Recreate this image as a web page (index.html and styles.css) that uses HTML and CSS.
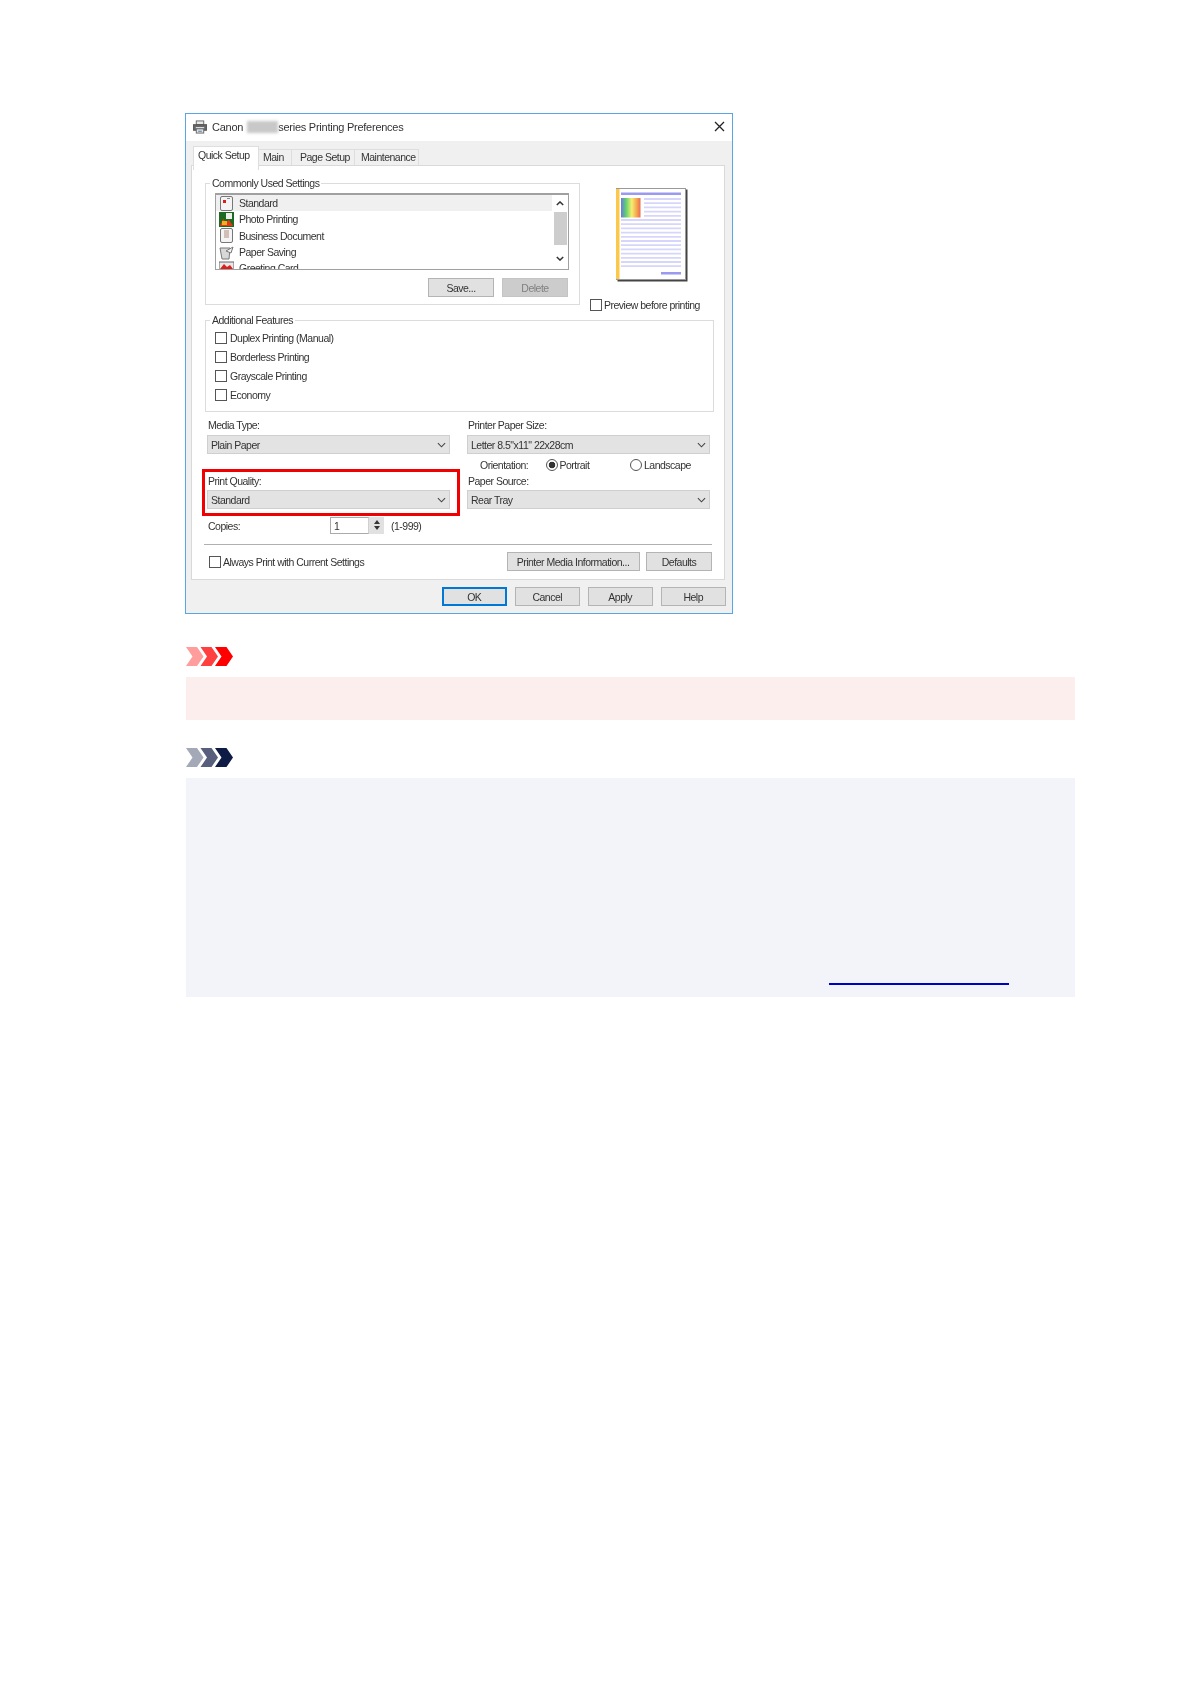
FILE: index.html
```html
<!DOCTYPE html>
<html lang="en">
<head>
    <meta charset="UTF-8">
    <meta name="viewport" content="width=device-width, initial-scale=1.0">
    <title>Print Quality</title>
    <link rel="stylesheet" href="styles.css">
</head>
<body>
    <svg class="sprites" width="0" height="0">
        <symbol id="chev-down" viewBox="0 0 10 6"><path d="M1 1l4 4 4-4" fill="none" stroke="#444" stroke-width="1.2"/></symbol>
        <symbol id="chev-up" viewBox="0 0 10 6"><path d="M1 5l4-4 4 4" fill="none" stroke="#333" stroke-width="1.8"/></symbol>
        <symbol id="chev-bold" viewBox="0 0 10 6"><path d="M1 1l4 4 4-4" fill="none" stroke="#333" stroke-width="1.8"/></symbol>
    </svg>
    <main class="doc">
        <section class="dialog">
            <header class="titlebar">
                <svg class="printer-icon" viewBox="0 0 15 14">
                    <rect x="3.5" y="0.5" width="8" height="4" fill="#e8e8e8" stroke="#666"/>
                    <rect x="0.5" y="4.5" width="14" height="6" fill="#666" stroke="#555"/>
                    <rect x="3" y="7" width="9" height="1.5" fill="#ddd"/>
                    <rect x="3.5" y="9" width="8" height="4.5" fill="#e4e4e4" stroke="#666"/>
                    <rect x="5.5" y="11" width="4" height="1" fill="#3a78b0"/>
                </svg>
                <span class="title-part">Canon</span>
                <span class="blurred"></span>
                <span class="title-part">series Printing Preferences</span>
                <svg class="close-icon" viewBox="0 0 11 11"><path d="M1 1l9 9M10 1l-9 9" stroke="#222" stroke-width="1.3"/></svg>
            </header>

            <nav class="tabs">
                <span class="tab tab-active">Quick Setup</span>
                <span class="tab tab-main">Main</span>
                <span class="tab tab-page">Page Setup</span>
                <span class="tab tab-maint">Maintenance</span>
            </nav>

            <div class="panel">
                <div class="top-row">
                    <fieldset class="group group-settings">
                        <legend>Commonly Used Settings</legend>
                        <div class="listbox">
                            <ul class="list-items">
                                <li class="list-item selected">
                                    <svg class="list-icon" viewBox="0 0 15 15">
                                        <rect x="1.500" y="0.500" width="12" height="14" rx="1.500" fill="#f4f4f4" stroke="#777"/>
                                        <rect x="4" y="4" width="3" height="3" fill="#d8201c"/>
                                        <rect x="8" y="2" width="3" height="1" fill="#888"/>
                                    </svg>
                                    Standard
                                </li>
                                <li class="list-item">
                                    <svg class="list-icon" viewBox="0 0 15 15">
                                        <rect width="15" height="15" fill="#1d6b22"/>
                                        <rect x="7" y="1" width="6" height="6" fill="#eee"/>
                                        <path d="M1 14l3-7 3 3 3-2 4 6z" fill="#e23a10"/>
                                        <rect x="3" y="9" width="5" height="4" fill="#f0b020"/>
                                    </svg>
                                    Photo Printing
                                </li>
                                <li class="list-item">
                                    <svg class="list-icon" viewBox="0 0 15 15">
                                        <rect x="1.500" y="0.500" width="12" height="14" rx="1.500" fill="#f4f4f4" stroke="#777"/>
                                        <path d="M5 3h5M5 5h5M5 7h5M5 9h5" stroke="#b08a80"/>
                                    </svg>
                                    Business Document
                                </li>
                                <li class="list-item">
                                    <svg class="list-icon" viewBox="0 0 15 15">
                                        <path d="M1 3h10l-1 11H3z" fill="#d8d8d8" stroke="#777"/>
                                        <path d="M7 6l7-4-2 6z" fill="#f2f2f2" stroke="#777"/>
                                    </svg>
                                    Paper Saving
                                </li>
                                <li class="list-item">
                                    <svg class="list-icon" viewBox="0 0 15 15">
                                        <rect y="1" width="15" height="13" fill="#e8e8e8" stroke="#666"/>
                                        <path d="M1 8l4-5 3 3 3-2 3 4v3H1z" fill="#d9201c"/>
                                    </svg>
                                    Greeting Card
                                </li>
                            </ul>
                            <div class="scrollbar">
                                <svg class="scroll-arrow"><use href="#chev-up"/></svg>
                                <span class="scroll-thumb"></span>
                                <svg class="scroll-arrow scroll-arrow-down"><use href="#chev-bold"/></svg>
                            </div>
                        </div>
                        <div class="list-buttons">
                            <button class="btn btn-list">Save...</button>
                            <button class="btn btn-list btn-disabled">Delete</button>
                        </div>
                    </fieldset>
                    <div class="preview-col">
                        <svg class="preview-page" viewBox="0 0 72 94">
                            <defs>
                                <linearGradient id="rainbow">
                                    <stop offset="0" stop-color="#6a78e0"/>
                                    <stop offset="0.25" stop-color="#5fd070"/>
                                    <stop offset="0.55" stop-color="#f5ee70"/>
                                    <stop offset="0.8" stop-color="#f5a850"/>
                                    <stop offset="1" stop-color="#e86a50"/>
                                </linearGradient>
                            </defs>
                            <rect x="1.500" y="1.500" width="70" height="92" fill="#444"/>
                            <rect x="0.500" y="0.500" width="69" height="91" fill="#fff" stroke="#999"/>
                            <rect x="0" y="1" width="3.500" height="90" fill="#fcc84a"/>
                            <rect x="5" y="4.500" width="60" height="2.500" fill="#9a9af0"/>
                            <path class="preview-lines" d="M28 11h37M28 15.200h37M28 19.400h37M28 23.600h37M28 27.800h37M5 32h60M5 36.200h60M5 40.400h60M5 44.600h60M5 48.800h60M5 53h60M5 57.200h60M5 61.400h60M5 65.600h60M5 69.800h60M5 74h60M5 78.200h60"/>
                            <rect x="5" y="10" width="19.500" height="19.500" fill="url(#rainbow)"/>
                            <rect x="45" y="84" width="20" height="2.500" fill="#9a9af0"/>
                        </svg>
                        <label class="check-row preview-check"><span class="checkbox"></span>Preview before printing</label>
                    </div>
                </div>

                <fieldset class="group group-features">
                    <legend>Additional Features</legend>
                    <label class="check-row feature-row"><span class="checkbox"></span>Duplex Printing (Manual)</label>
                    <label class="check-row feature-row"><span class="checkbox"></span>Borderless Printing</label>
                    <label class="check-row feature-row"><span class="checkbox"></span>Grayscale Printing</label>
                    <label class="check-row feature-row"><span class="checkbox"></span>Economy</label>
                </fieldset>

                <div class="form-grid">
                    <div class="form-col">
                        <div class="field-label">Media Type:</div>
                        <div class="select">Plain Paper<svg class="select-arrow"><use href="#chev-down"/></svg></div>
                        <div class="highlight">
                            <div class="field-label">Print Quality:</div>
                            <div class="select">Standard<svg class="select-arrow"><use href="#chev-down"/></svg></div>
                        </div>
                    </div>
                    <div class="form-col">
                        <div class="field-label">Printer Paper Size:</div>
                        <div class="select">Letter 8.5"x11" 22x28cm<svg class="select-arrow"><use href="#chev-down"/></svg></div>
                        <div class="orientation">
                            <span class="orient-label">Orientation:</span>
                            <span class="orient-option orient-portrait"><span class="radio radio-on"></span>Portrait</span>
                            <span class="orient-option"><span class="radio"></span>Landscape</span>
                        </div>
                        <div class="field-label source-label">Paper Source:</div>
                        <div class="select">Rear Tray<svg class="select-arrow"><use href="#chev-down"/></svg></div>
                    </div>
                </div>

                <div class="copies">
                    <span class="copies-label">Copies:</span>
                    <span class="copies-input">1</span>
                    <span class="spinner">
                        <span class="spin-up"></span>
                        <span class="spin-down"></span>
                    </span>
                    <span class="copies-range">(1-999)</span>
                </div>

                <div class="separator"></div>

                <div class="panel-bottom">
                    <label class="check-row always-check"><span class="checkbox"></span>Always Print with Current Settings</label>
                    <div class="panel-buttons">
                        <button class="btn btn-media">Printer Media Information...</button>
                        <button class="btn btn-list">Defaults</button>
                    </div>
                </div>
            </div>

            <footer class="dialog-buttons">
                <button class="btn btn-footer btn-default">OK</button>
                <button class="btn btn-footer">Cancel</button>
                <button class="btn btn-footer">Apply</button>
                <button class="btn btn-footer">Help</button>
            </footer>
        </section>

        <svg class="notice-icon" viewBox="0 0 47 19">
            <path d="M0 0h11l6.500 9.500L11 19H0l6.500-9.500z" fill="#ff9c9c"/>
            <path d="M14.500 0h11l6.500 9.500-6.500 9.500h-11L21 9.500z" fill="#ff4040"/>
            <path d="M29 0h11.500l6.500 9.500-6.500 9.500H29l6.500-9.500z" fill="#ff0000"/>
        </svg>
        <div class="notice notice-important"></div>

        <svg class="notice-icon notice-icon-note" viewBox="0 0 47 19">
            <path d="M0 0h11l6.500 9.500L11 19H0l6.500-9.500z" fill="#a4a9b8"/>
            <path d="M14.500 0h11l6.500 9.500-6.500 9.500h-11L21 9.500z" fill="#585f7c"/>
            <path d="M29 0h11.500l6.500 9.500-6.500 9.500H29l6.500-9.500z" fill="#0d1b45"/>
        </svg>
        <div class="notice notice-note">
            <a class="doc-link" href="#"></a>
        </div>
    </main>
</body>
</html>
```

FILE: styles.css
```css
* {
    box-sizing: border-box;
}
body {
    margin: 0;
    background-color: #ffffff;
    font-family: "Liberation Sans", Arial, sans-serif;
    color: #333333;
}
.sprites {
    display: block;
    height: 0;
}
.doc {
    width: 1075px;
    padding: 113px 0 0 186px;
}

/* dialog - the whole thing is a soft upscaled picture, hence the blur */
.dialog {
    width: 548px;
    height: 501px;
    margin-left: -1px;
    border: 1px solid #5aa5e6;
    background-color: #f0f0f0;
    font-size: 10.5px;
    line-height: 12px;
    letter-spacing: -0.5px;
    filter: blur(0.6px);
}
.titlebar {
    display: flex;
    align-items: center;
    height: 27px;
    padding: 0 0 2px 7px;
    background-color: #ffffff;
    font-size: 11px;
    letter-spacing: -0.25px;
}
.printer-icon {
    width: 14px;
    height: 14px;
    margin-right: 5px;
}
.blurred {
    width: 31px;
    height: 12px;
    margin: 0 0 0 4px;
    background-color: #c8c8c8;
    filter: blur(1.5px);
}
.close-icon {
    width: 11px;
    height: 11px;
    margin-left: auto;
    margin-right: 7px;
}
.tabs {
    display: flex;
    align-items: flex-end;
    height: 24px;
    padding-left: 7px;
}
.tab {
    display: block;
    height: 16px;
    margin-right: -1px;
    padding: 1px 0 0 4px;
    border: 1px solid #dedede;
    border-bottom: none;
    background-color: #f0f0f0;
}
.tab-active {
    position: relative;
    z-index: 1;
    width: 66px;
    height: 24px;
    margin-bottom: -5px;
    padding: 2px 0 0 4px;
    background-color: #ffffff;
}
.tab-main {
    width: 34px;
}
.tab-page {
    width: 64px;
    padding-left: 8px;
}
.tab-maint {
    width: 65px;
    padding-left: 6px;
}
.panel {
    width: 534px;
    height: 415px;
    margin-left: 5px;
    padding: 11px 0 0 13px;
    border: 1px solid #d9d9d9;
    background-color: #ffffff;
}
.top-row {
    display: flex;
    height: 128px;
}
.group {
    margin: 0;
    border: 1px solid #dcdcdc;
    min-width: 0;
}
.group legend {
    margin-left: -5px;
    padding: 0 2px;
    line-height: 12px;
}
.group-settings {
    width: 375px;
    height: 128px;
    padding: 4px 10px 0 9px;
}
.listbox {
    display: flex;
    width: 354px;
    height: 77px;
    border: 1px solid #a0a0a0;
    border-top-width: 2px;
    overflow: hidden;
}
.list-items {
    flex: 1;
    margin: 0;
    padding: 0;
    list-style: none;
}
.list-item {
    display: flex;
    align-items: center;
    gap: 5px;
    height: 16.3px;
    padding-left: 3px;
}
.selected {
    background-color: #f0f0f0;
}
.list-icon {
    flex: none;
    width: 15px;
    height: 15px;
}
.scrollbar {
    display: flex;
    flex-direction: column;
    align-items: center;
    width: 16px;
    padding-top: 6px;
}
.scroll-arrow {
    width: 8px;
    height: 5px;
}
.scroll-thumb {
    width: 13px;
    height: 33px;
    margin-top: 6px;
    background-color: #cdcdcd;
}
.scroll-arrow-down {
    margin-top: 11px;
}
.list-buttons {
    display: flex;
    justify-content: flex-end;
    gap: 8px;
    margin-top: 8px;
    padding-right: 1px;
}
.btn {
    display: block;
    padding: 0;
    height: 19px;
    border: 1px solid #b4b4b4;
    background-color: #e1e1e1;
    color: #333333;
    font: inherit;
    letter-spacing: inherit;
    text-align: center;
}
.btn-list {
    width: 66px;
}
.btn-disabled {
    border-color: #c4c4c4;
    background-color: #cccccc;
    color: #808080;
}
.preview-col {
    padding: 11px 0 0 10px;
}
.preview-page {
    display: block;
    width: 72px;
    height: 94px;
    margin-left: 26px;
}
.preview-lines {
    fill: none;
    stroke: #d6d6fc;
    stroke-width: 1.8;
}
.check-row {
    display: flex;
    align-items: center;
    gap: 3px;
    white-space: nowrap;
}
.checkbox {
    flex: none;
    display: block;
    width: 12px;
    height: 12px;
    border: 1px solid #555555;
    background-color: #ffffff;
}
.preview-check {
    margin-top: 17px;
    gap: 2px;
}
.group-features {
    width: 509px;
    height: 98px;
    margin-top: 9px;
    padding: 2px 0 0 9px;
}
.feature-row {
    height: 19px;
}
.form-grid {
    display: grid;
    grid-template-columns: 243px 243px;
    column-gap: 17px;
    margin: 7px 0 0 2px;
    align-items: start;
}
.field-label {
    height: 12px;
    margin-bottom: 3px;
    padding-left: 1px;
}
.form-col > .field-label:first-child {
    margin-bottom: 4px;
}
.select {
    position: relative;
    height: 19px;
    padding: 3px 0 0 3px;
    border: 1px solid #cfcfcf;
    background-color: #e3e3e3;
}
.select-arrow {
    position: absolute;
    top: 6px;
    right: 3px;
    width: 9px;
    height: 6px;
}
.highlight {
    margin: 15px -7px 0 -5px;
    padding: 3px 7px 4px 2px;
    height: 47px;
    width: 258px;
    border: 3px solid #f00000;
}
.orientation {
    display: flex;
    align-items: center;
    height: 12px;
    margin-top: 5px;
    padding-left: 13px;
}
.orient-label {
    width: 65.5px;
}
.orient-option {
    display: flex;
    align-items: center;
    gap: 2px;
}
.orient-portrait {
    width: 84.5px;
}
.radio {
    display: block;
    width: 12px;
    height: 12px;
    border: 1px solid #555555;
    border-radius: 50%;
    background-color: #ffffff;
}
.radio-on {
    background: radial-gradient(circle, #333333 0 3px, #ffffff 3.6px);
}
.source-label {
    margin-top: 4px;
}
.copies {
    display: flex;
    align-items: center;
    height: 17px;
    margin: 1px 0 0 2px;
}
.copies-label {
    width: 123px;
    padding-left: 1px;
}
.copies-input {
    width: 39px;
    height: 17px;
    padding: 2px 0 0 3px;
    border: 1px solid #aaaaaa;
    border-right-color: #d0d0d0;
    background-color: #ffffff;
}
.spinner {
    display: flex;
    flex-direction: column;
    align-items: center;
    gap: 2px;
    width: 15px;
    height: 17px;
    padding-top: 3px;
    background-color: #e1e1e1;
}
.spin-up {
    border: 3px solid transparent;
    border-top: none;
    border-bottom: 4px solid #333333;
}
.spin-down {
    border: 3px solid transparent;
    border-bottom: none;
    border-top: 4px solid #333333;
}
.copies-range {
    margin-left: 7px;
}
.separator {
    width: 508px;
    height: 1px;
    margin: 10px 0 0 -1px;
    background-color: #b0b0b0;
}
.panel-bottom {
    display: flex;
    align-items: center;
    justify-content: space-between;
    width: 507px;
    margin-top: 7px;
}
.always-check {
    margin-left: 4px;
    gap: 2px;
}
.panel-buttons {
    display: flex;
    gap: 6.5px;
}
.btn-media {
    width: 133px;
}
.dialog-buttons {
    display: flex;
    justify-content: flex-end;
    gap: 7.5px;
    padding: 7px 6px 0 0;
}
.btn-footer {
    width: 65.5px;
}
.btn-default {
    border: 2px solid #0078d7;
}

/* notices under the dialog */
.notice-icon {
    display: block;
    width: 47px;
    height: 19px;
    margin-top: 33px;
}
.notice-icon-note {
    margin-top: 28px;
}
.notice {
    margin-top: 11px;
}
.notice-important {
    height: 43px;
    background-color: #fdeeee;
}
.notice-note {
    display: flex;
    align-items: flex-end;
    height: 219px;
    padding: 0 0 12px 643px;
    background-color: #f3f4f9;
}
.doc-link {
    display: block;
    width: 180px;
    height: 2px;
    background-color: #0000c4;
}
```
